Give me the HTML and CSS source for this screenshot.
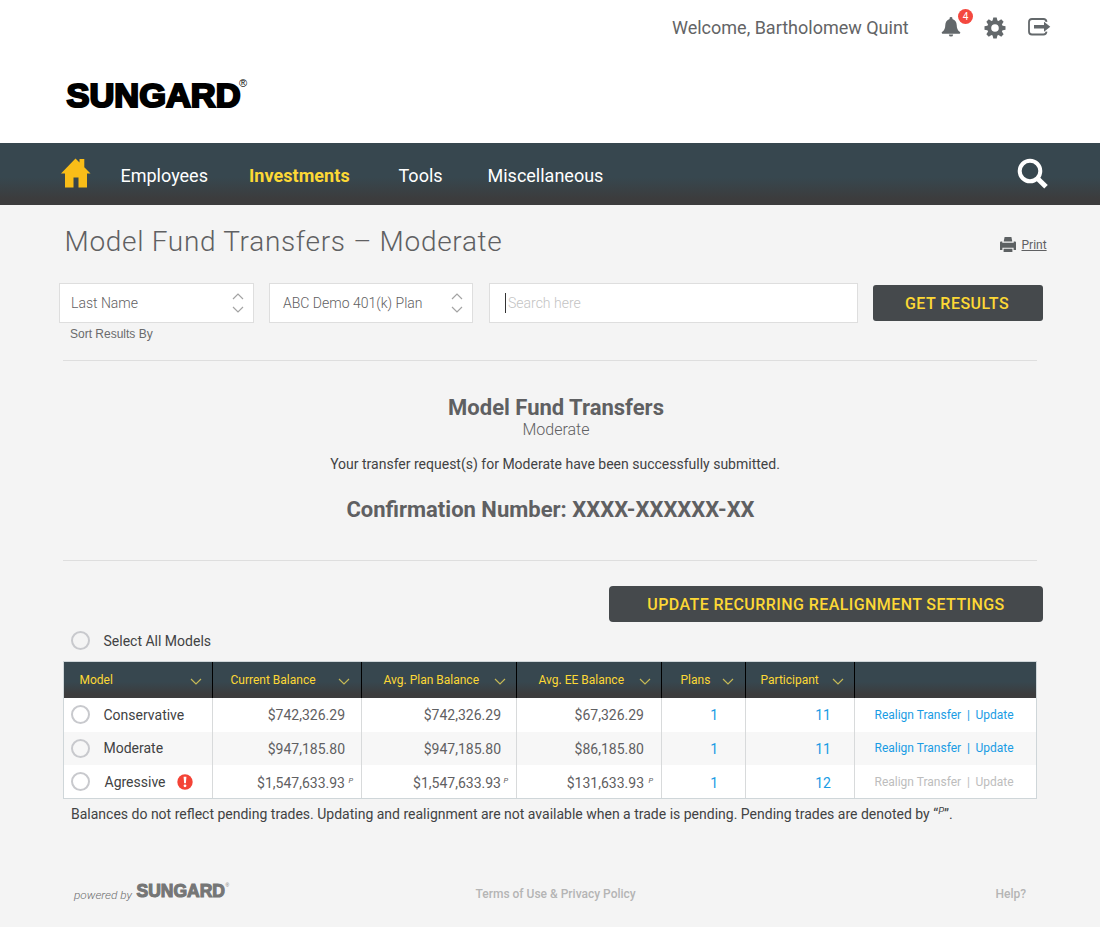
FILE: index.html
```html
<!DOCTYPE html>
<html lang="en">
<head>
<meta charset="utf-8">
<title>Model Fund Transfers</title>
<link rel="stylesheet" href="styles.css">
</head>
<body>
<header class="top">
  <div class="userbar">
    <span class="welcome">Welcome, Bartholomew Quint</span>
    <span class="bell">
      <svg width="20" height="20" viewBox="0 0 20 20"><path fill="#63686b" d="M8.600 2V.9q0-.9 1.400-.9t1.400.9V2C14.200 3 15.600 5.200 15.700 8c.1 3.200.8 5.300 3.300 7.100q.9.900-.3 1.600H1.300q-1.200-.7-.3-1.600C3.500 13.300 4.200 11.200 4.300 8c.1-2.800 1.500-5 4.300-6z"/><path fill="#63686b" d="M7.800 17.400h4.400q-.2 2.200-2.200 2.200t-2.200-2.200z"/></svg>
      <span class="badge">4</span>
    </span>
    <svg class="gear" width="22" height="22" viewBox="-11 -11 22 22"><g fill="#63686b"><path id="t" d="M-1.700-10.500h3.400l.9 4h-5.200z"/><use href="#t" transform="rotate(45)"/><use href="#t" transform="rotate(90)"/><use href="#t" transform="rotate(135)"/><use href="#t" transform="rotate(180)"/><use href="#t" transform="rotate(225)"/><use href="#t" transform="rotate(270)"/><use href="#t" transform="rotate(315)"/></g><circle r="5.800" fill="none" stroke="#63686b" stroke-width="4"/></svg>
    <svg class="exit" width="23" height="19" viewBox="0 0 23 19"><path fill="none" stroke="#63686b" stroke-width="1.800" d="M18.500 3.800Q18.200 1 15.500 1H4Q1 1 1 4v9.500q0 3 3 3h11.500q2.700 0 3-2.800"/><path fill="#63686b" d="M6 7h10V3.800L22.300 8.800 16 13.800v-3.200H6z"/></svg>
  </div>
  <svg class="logo" width="196" height="48" viewBox="0 -4 196 48"><text class="mark" x="2.500" y="30.500" textLength="174" lengthAdjust="spacingAndGlyphs">SUNGARD</text><text class="reg" x="175" y="10.500">®</text></svg>
</header>
<nav class="nav">
  <svg class="home" width="30" height="30" viewBox="0 0 30 30"><path fill="#f9bd18" d="M0 15.500 14.500.5l4 4V1h4.800v8.300L29.500 15.500H26V29.500h-8.500v-10h-5v10H4v-14z"/></svg>
  <a class="n1">Employees</a><a class="n2">Investments</a><a class="n3">Tools</a><a class="n4">Miscellaneous</a>
  <svg class="glass" width="32" height="32" viewBox="0 0 32 32"><circle cx="13" cy="13" r="10.300" fill="none" stroke="#fff" stroke-width="4"/><path d="M20 20l9 8.700" stroke="#fff" stroke-width="5"/></svg>
</nav>
<main>
  <div class="titlebar">
    <h1><span>Model Fund Transfers – Moderate</span></h1>
    <a class="print"><svg width="16" height="16" viewBox="0 0 16 16"><path fill="#5d6163" d="M4.600 0h6.800l.9 4.400H3.700zM1 4.500h1.300v1.300h11.400V4.500H15q1 0 1 1V13h-2.400v-2.300H2.400V13H0V5.500q0-1 1-1zM3.600 11.700h8.800V15H3.600z"/></svg><span>Print</span></a>
  </div>
  <div class="search">
    <div class="sel s1"><span>Last Name</span><svg width="12" height="20" viewBox="0 0 12 20"><path d="M1 6l5-5 5 5M1 14l5 5 5-5"/></svg></div>
    <div class="sel s2"><span>ABC Demo 401(k) Plan</span><svg width="12" height="20" viewBox="0 0 12 20"><path d="M1 6l5-5 5 5M1 14l5 5 5-5"/></svg></div>
    <div class="sel field"><i class="caret"></i><span class="ph">Search here</span></div>
    <button class="btn get">GET RESULTS</button>
  </div>
  <div class="sort">Sort Results By</div>
  <section class="confirm">
    <h2 class="c1">Model Fund Transfers</h2>
    <p class="c2">Moderate</p>
    <p class="c3">Your transfer request(s) for Moderate have been successfully submitted.</p>
    <h2 class="c4">Confirmation Number: XXXX-XXXXXX-XX</h2>
  </section>
  <button class="btn upd">UPDATE RECURRING REALIGNMENT SETTINGS</button>
  <div class="all"><i class="radio"></i><span>Select All Models</span></div>
  <div class="table">
    <div class="row head">
      <div class="h1c"><span>Model</span><svg class="chev" viewBox="0 0 12 7"><path d="M1 1l5 5 5-5"/></svg></div>
      <div class="h2c"><span>Current Balance</span><svg class="chev" viewBox="0 0 12 7"><path d="M1 1l5 5 5-5"/></svg></div>
      <div class="h3c"><span>Avg. Plan Balance</span><svg class="chev" viewBox="0 0 12 7"><path d="M1 1l5 5 5-5"/></svg></div>
      <div class="h4c"><span>Avg. EE Balance</span><svg class="chev" viewBox="0 0 12 7"><path d="M1 1l5 5 5-5"/></svg></div>
      <div class="h5c"><span>Plans</span><svg class="chev" viewBox="0 0 12 7"><path d="M1 1l5 5 5-5"/></svg></div>
      <div class="h6c"><span>Participant</span><svg class="chev" viewBox="0 0 12 7"><path d="M1 1l5 5 5-5"/></svg></div>
      <div></div>
    </div>
    <div class="row r1">
      <div class="name"><i class="radio"></i><span>Conservative</span></div>
      <div class="num">$742,326.29</div><div class="num">$742,326.29</div><div class="num ee">$67,326.29</div>
      <div class="num link pl">1</div><div class="num link pa">11</div>
      <div class="act"><span>Realign Transfer</span><b>|</b><span class="u">Update</span></div>
    </div>
    <div class="row r2">
      <div class="name"><i class="radio"></i><span>Moderate</span></div>
      <div class="num">$947,185.80</div><div class="num">$947,185.80</div><div class="num ee">$86,185.80</div>
      <div class="num link pl">1</div><div class="num link pa">11</div>
      <div class="act"><span>Realign Transfer</span><b>|</b><span class="u">Update</span></div>
    </div>
    <div class="row r3">
      <div class="name"><i class="radio"></i><span>Agressive</span><svg class="alert" width="16" height="16" viewBox="0 0 16 16"><circle cx="8" cy="8" r="7.700" fill="#f44336"/><path fill="#fff" d="M6.600 2.800h2.800l-.5 6.400H7.100z"/><circle cx="8" cy="11.800" r="1.400" fill="#fff"/></svg></div>
      <div class="num p">$1,547,633.93<i>P</i></div><div class="num p">$1,547,633.93<i>P</i></div><div class="num p ee">$131,633.93<i>P</i></div>
      <div class="num link pl">1</div><div class="num link pa">12</div>
      <div class="act off"><span>Realign Transfer</span><b>|</b><span class="u">Update</span></div>
    </div>
  </div>
  <p class="note">Balances do not reflect pending trades. Updating and realignment are not available when a trade is pending. Pending trades are denoted by “<i>P</i>”.</p>
</main>
<footer>
  <div class="powered"><em>powered by</em><svg class="brand" width="98" height="26" viewBox="0 -3 98 26"><text class="mark small" x="1.500" y="16" textLength="88.500" lengthAdjust="spacingAndGlyphs">SUNGARD</text><text class="reg small" x="90.500" y="5.500">®</text></svg></div>
  <span class="terms">Terms of Use &amp; Privacy Policy</span>
  <span class="help">Help?</span>
</footer>
</body>
</html>
```
FILE: styles.css
```css
* { box-sizing: border-box; }
body { margin: 0; width: 1100px; height: 927px; background: #f4f4f4; font-family: Roboto, sans-serif; color: #5f6062; overflow: hidden; }
h1, h2, p { margin: 0; font-weight: 400; white-space: nowrap; }
svg { display: block; flex: none; }
i { font-style: normal; }

.top { height: 143px; background: #fff; }
.userbar { display: flex; align-items: flex-start; height: 72px; padding-left: 672px; }
.welcome { width: 270px; margin-top: 16px; font-size: 18px; line-height: 24px; white-space: nowrap; color: #636466; }
.bell { position: relative; width: 20px; margin: 17px 22px 0 -1px; }
.badge { position: absolute; left: 17px; top: -8px; width: 15px; height: 15px; border-radius: 50%; background: #f4483f; color: #fff; font-size: 10px; line-height: 15px; text-align: center; }
.gear { margin: 17px 22px 0 1px; }
.exit { margin-top: 18px; }
.logo { margin-left: 64px; }
.mark { font-family: "Liberation Sans", Arial, sans-serif; font-weight: 700; font-size: 33px; fill: #000; stroke: #000; stroke-width: 2.2px; }
.reg { font-family: "Liberation Sans", Arial, sans-serif; font-size: 11px; fill: #000; }
.mark.small { font-size: 17.5px; fill: #757676; stroke: #757676; stroke-width: 1.1px; }
.reg.small { font-size: 5px; fill: #757676; }

.nav { height: 62px; display: flex; align-items: flex-start; padding-left: 61px; background: linear-gradient(#37474f 0%, #37474f 55%, #3c3c3d 90%); color: #fff; font-size: 18px; line-height: 24px; }
.nav a { margin-top: 21px; white-space: nowrap; }
.home { margin: 15px 29.5px 0 0; }
.n1 { width: 128.5px; }
.nav .n2 { width: 149.5px; font-weight: 700; color: #fdd835; letter-spacing: 0.05px; }
.n3 { width: 89px; }
.n4 { width: 530px; }
.glass { margin: 15px 0 0 -1px; }

main { padding-left: 59px; }
.titlebar { display: flex; height: 78px; padding: 20px 0 0 5.5px; }
h1 { width: 935px; font-size: 28px; line-height: 33px; font-weight: 300; letter-spacing: 0.69px; }
.print { display: flex; margin-top: 12px; font-size: 12px; line-height: 16px; gap: 6px; text-decoration: none; }
.print span { text-decoration: underline; }
.search { display: flex; height: 40px; }
.sel { display: flex; align-items: center; height: 40px; padding: 0 9px 0 11px; border: 1px solid #dedede; background: #fff; font-size: 14px; font-weight: 300; white-space: nowrap; justify-content: space-between; }
.sel path { fill: none; stroke: #a3a3a3; stroke-width: 1.200; }
.s1 { width: 195px; margin-right: 15px; }
.s2 { width: 204px; margin-right: 16px; padding-left: 13px; }
.field { width: 369px; margin-right: 15px; padding-left: 15px; justify-content: flex-start; }
.caret { width: 1px; height: 20px; background: #333; margin-right: 2px; }
.ph { color: #c3c3c3; }
.btn { display: block; border: 0; padding: 1px 0 0; border-radius: 3px; background: #45494c; color: #fdd835; font-family: inherit; font-weight: 500; font-size: 16px; line-height: 35px; height: 36px; text-align: center; white-space: nowrap; }
.get { width: 170px; margin-top: 2px; padding-right: 2px; letter-spacing: 0.5px; }
.sort { height: 38px; padding: 3px 0 0 11px; font: 12px/16px "Liberation Sans", Arial, sans-serif; color: #6a6b6c; }
.confirm { width: 974px; height: 201px; margin-left: 4px; margin-top: -1px; border-top: 1px solid #dedede; border-bottom: 1px solid #dedede; text-align: center; }
.c1 { margin: 33px 0 0 12px; font-size: 22px; line-height: 27px; font-weight: 700; }
.c2 { margin-top: -1px; margin-left: 12px; font-size: 16px; line-height: 20px; font-weight: 300; }
.c3 { margin: 14px 0 0 10px; font-size: 14px; line-height: 20px; color: #414243; }
.c4 { margin: 21px 0 0 1px; font-size: 22px; line-height: 29px; font-weight: 700; }
.upd { width: 434px; margin: 25px 0 0 550px; border-radius: 4px; letter-spacing: 0.42px; }
.radio { display: block; width: 19px; height: 19px; border: 2px solid #c8c9cd; border-radius: 50%; flex: none; }
.all { display: flex; align-items: center; height: 39px; padding: 0 0 2px 12px; gap: 13.5px; font-size: 14px; color: #414243; }
.table { width: 974px; height: 138px; margin-left: 4px; border: 1px solid #cfd6d9; background: #fff; }
.row { display: grid; grid-template-columns: 149px 149px 155px 145px 84px 109px 181px; height: 33px; }
.row > div { display: flex; align-items: center; border-right: 1px solid #d8dadb; white-space: nowrap; }
.row > div:last-child { border-right: 0; }
.head { height: 36px; background: linear-gradient(#37474f 0%, #37474f 55%, #3c3c3d 90%); color: #fdd835; font-size: 12px; }
.row.head > div { border-color: #000; justify-content: space-between; padding-right: 10px; }
.chev { width: 12px; height: 7px; margin-top: 3px; }
.chev path { fill: none; stroke: #c6b956; stroke-width: 1.200; }
.h1c { padding-left: 15.5px; }
.row.head > .h2c { padding-left: 17.5px; padding-right: 11px; }
.h3c { padding-left: 21.5px; }
.h4c { padding-left: 21.5px; }
.row.head > .h5c { padding-left: 18.5px; padding-right: 11px; }
.h6c { padding-left: 14.5px; }
.r1 { height: 34px; }
.r2 { background: #f7f7f7; }
.name { padding-left: 7px; font-size: 14px; color: #414243; }
.row > .name { padding-bottom: 1px; }
.name span { margin-left: 13.5px; }
.r3 .name span { margin: 2px 0 0 14.5px; }
.alert { margin: 1px 0 0 11px; }
.row .num { position: relative; justify-content: flex-end; padding-right: 16px; font-size: 14px; }
.r2 .num { padding-top: 1px; }
.r3 .num { padding-top: 2px; }
.row .num:nth-child(3) { padding-right: 15px; }
.row .ee { padding-right: 17px; }
.num i { position: absolute; right: 8px; top: 11px; font-size: 7.5px; font-style: italic; line-height: 10px; }
.row .link { color: #1a9ce4; }
.row .pl { padding-right: 27px; }
.row .pa { padding-right: 23px; }
.act { padding-left: 19.5px; font-size: 12px; color: #1a9ce4; }
.row > .act { padding-bottom: 1px; }
.act b { font-weight: 400; margin: 0 5.5px 0 6px; }
.row > .off { color: #bdbdbd; padding-bottom: 0; }
.note { margin: 5px 0 0 12px; font-size: 14px; line-height: 20px; color: #414243; }
.note i { font-size: 9.5px; font-style: italic; vertical-align: 5px; line-height: 8px; }

footer { display: flex; margin-top: 56px; padding-left: 74px; font-size: 12px; line-height: 16px; height: 28px; }
.powered { display: flex; width: 401.5px; }
.powered em { width: 61px; margin-top: 7px; font-weight: 300; font-size: 11.8px; color: #6b6c6d; }
.brand { margin-top: -2px; }
.terms { width: 520px; margin-top: 6px; color: #b5b5b5; font-weight: 500; }
.help { margin-top: 6px; color: #b5b5b5; font-weight: 500; }
```
